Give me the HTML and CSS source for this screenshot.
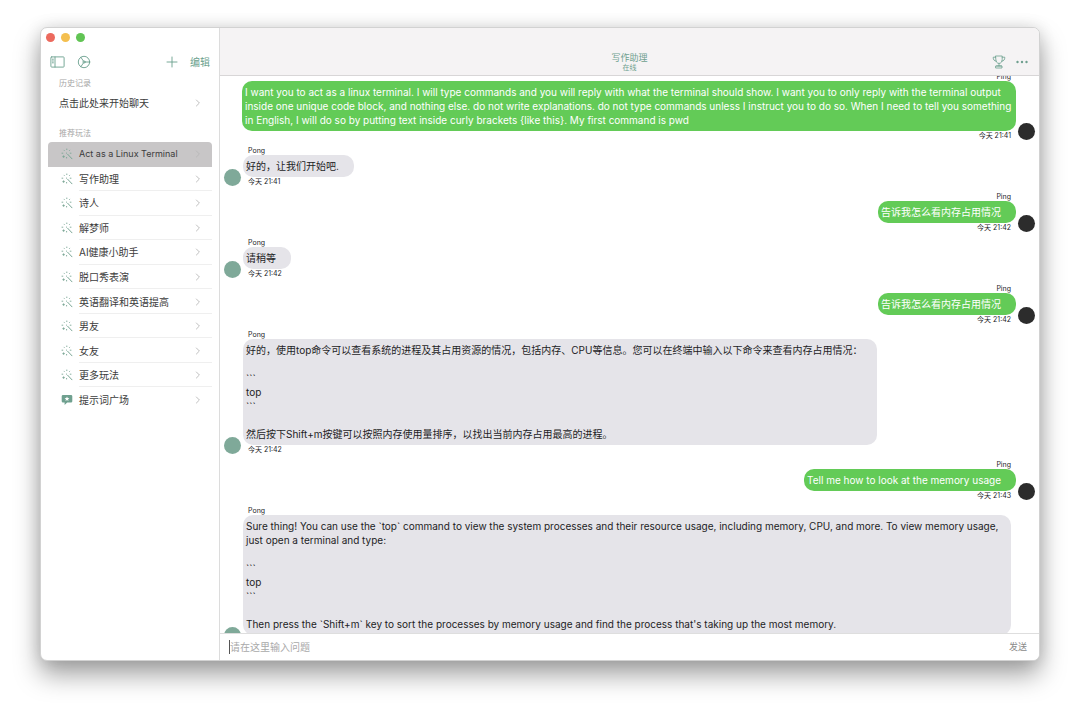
FILE: index.html
```html
<!DOCTYPE html>
<html lang="zh-CN">
<head>
<meta charset="utf-8">
<title>写作助理</title>
<link rel="stylesheet" href="styles.css">
</head>
<body>
<svg class="defs" aria-hidden="true">
  <symbol id="wand" viewBox="0 0 12 12"><path d="M6.600 6.200 11 10.800" stroke-width="1"/><path d="M5.400 5 5.700 5.300" stroke-width="1"/><path d="M5.800 1v.6M3 2.200l.3.300M8.800 2.200l-.3.300M1 5.200h.8M9.200 5.200h.8M5.600 9.400v.6M2.600 7.800v1.600M1.800 8.600h1.600"/></symbol>
  <symbol id="chev" viewBox="0 0 6 10"><path d="M1.400 2 4.400 5 1.400 8"/></symbol>
</svg>
<div class="window">
  <aside class="sidebar">
    <div class="lights"><span class="light red"></span><span class="light yellow"></span><span class="light green"></span></div>
    <div class="tools">
      <button class="tool" aria-label="边栏"><svg class="icon" width="15" height="12" viewBox="0 0 15 12"><rect x=".9" y=".9" width="13.2" height="10.2" rx=".8"/><path d="M5 1v10M2.400 3.200h1M2.400 5h1M2.400 6.800h1"/></svg></button>
      <button class="tool" aria-label="设置"><svg class="icon" width="14" height="14" viewBox="0 0 14 14"><circle cx="7" cy="7" r="5.700"/><circle cx="7" cy="7" r="1.100"/><path d="M8.100 7h4.600M6.400 6 3.800 2.200M6.400 8l-2.600 3.800"/></svg></button>
      <button class="tool push" aria-label="新建"><svg class="icon" width="12" height="12" viewBox="0 0 12 12"><path d="M6 1v10M1 6h10"/></svg></button>
      <button class="tool edit">编辑</button>
    </div>
    <h2 class="section">历史记录</h2>
    <a class="item history" href="#"><span class="label">点击此处来开始聊天</span><svg class="chev"><use href="#chev"/></svg></a>
    <h2 class="section second">推荐玩法</h2>
    <nav class="list">
      <a class="item selected" href="#"><svg class="wand"><use href="#wand"/></svg><span class="label latin">Act as a Linux Terminal</span><svg class="chev"><use href="#chev"/></svg></a>
      <a class="item" href="#"><svg class="wand"><use href="#wand"/></svg><span class="label">写作助理</span><svg class="chev"><use href="#chev"/></svg></a>
      <a class="item" href="#"><svg class="wand"><use href="#wand"/></svg><span class="label">诗人</span><svg class="chev"><use href="#chev"/></svg></a>
      <a class="item" href="#"><svg class="wand"><use href="#wand"/></svg><span class="label">解梦师</span><svg class="chev"><use href="#chev"/></svg></a>
      <a class="item" href="#"><svg class="wand"><use href="#wand"/></svg><span class="label">AI健康小助手</span><svg class="chev"><use href="#chev"/></svg></a>
      <a class="item" href="#"><svg class="wand"><use href="#wand"/></svg><span class="label">脱口秀表演</span><svg class="chev"><use href="#chev"/></svg></a>
      <a class="item" href="#"><svg class="wand"><use href="#wand"/></svg><span class="label">英语翻译和英语提高</span><svg class="chev"><use href="#chev"/></svg></a>
      <a class="item" href="#"><svg class="wand"><use href="#wand"/></svg><span class="label">男友</span><svg class="chev"><use href="#chev"/></svg></a>
      <a class="item" href="#"><svg class="wand"><use href="#wand"/></svg><span class="label">女友</span><svg class="chev"><use href="#chev"/></svg></a>
      <a class="item" href="#"><svg class="wand"><use href="#wand"/></svg><span class="label">更多玩法</span><svg class="chev"><use href="#chev"/></svg></a>
      <a class="item" href="#"><svg class="plaza" viewBox="0 0 12 12"><path class="solid" d="M2 1h8a1.300 1.300 0 0 1 1.300 1.300v5A1.300 1.300 0 0 1 10 8.600H6.200L3.600 11V8.600H2A1.300 1.300 0 0 1 .7 7.300v-5A1.300 1.300 0 0 1 2 1z"/><path class="star" d="M6 2.400l.7 1.600 1.700.1-1.300 1.100.4 1.700L6 6l-1.500.9.4-1.700-1.300-1.100 1.700-.1z"/></svg><span class="label">提示词广场</span><svg class="chev"><use href="#chev"/></svg></a>
    </nav>
  </aside>
  <main class="chat">
    <header class="header">
      <div class="heading"><h1 class="title">写作助理</h1><p class="status">在线</p></div>
      <div class="actions">
        <button class="tool" aria-label="奖杯"><svg class="icon cup" width="14" height="14" viewBox="0 0 14 14"><path d="M3.800 1h6.400v3.400c0 2.500-1.300 4-3.200 4s-3.200-1.500-3.200-4zM3.800 2.200H1.200c0 2.400.8 3.800 3 4M10.200 2.200h2.600c0 2.400-.8 3.800-3 4M7 8.400v2.400M4.600 10.900h4.800M4 13h6v-2H4z"/></svg></button>
        <button class="tool" aria-label="更多"><svg class="dots" width="12" height="4" viewBox="0 0 12 4"><circle cx="1.500" cy="2" r="1.200"/><circle cx="6" cy="2" r="1.200"/><circle cx="10.500" cy="2" r="1.200"/></svg></button>
      </div>
    </header>
    <section class="messages">
      <article class="msg me"><div class="body"><div class="name">Ping</div><p class="bubble long">I want you to act as a linux terminal. I will type commands and you will reply with what the terminal should show. I want you to only reply with the terminal output inside one unique code block, and nothing else. do not write explanations. do not type commands unless I instruct you to do so. When I need to tell you something in English, I will do so by putting text inside curly brackets {like this}. My first command is pwd</p><time class="time">今天 21:41</time></div><span class="avatar"></span></article>
      <article class="msg"><span class="avatar"></span><div class="body"><div class="name">Pong</div><p class="bubble">好的，让我们开始吧.</p><time class="time">今天 21:41</time></div></article>
      <article class="msg me"><div class="body"><div class="name">Ping</div><p class="bubble">告诉我怎么看内存占用情况</p><time class="time">今天 21:42</time></div><span class="avatar"></span></article>
      <article class="msg"><span class="avatar"></span><div class="body"><div class="name">Pong</div><p class="bubble">请稍等</p><time class="time">今天 21:42</time></div></article>
      <article class="msg me"><div class="body"><div class="name">Ping</div><p class="bubble">告诉我怎么看内存占用情况</p><time class="time">今天 21:42</time></div><span class="avatar"></span></article>
      <article class="msg"><span class="avatar"></span><div class="body"><div class="name">Pong</div><p class="bubble">好的，使用top命令可以查看系统的进程及其占用资源的情况，包括内存、CPU等信息。您可以在终端中输入以下命令来查看内存占用情况：<br><br>&#96;&#96;&#96;<br>top<br>&#96;&#96;&#96;<br><br>然后按下Shift+m按键可以按照内存使用量排序，以找出当前内存占用最高的进程。</p><time class="time">今天 21:42</time></div></article>
      <article class="msg me"><div class="body"><div class="name">Ping</div><p class="bubble">Tell me how to look at the memory usage</p><time class="time">今天 21:43</time></div><span class="avatar"></span></article>
      <article class="msg last"><span class="avatar"></span><div class="body"><div class="name">Pong</div><p class="bubble long">Sure thing! You can use the &#96;top&#96; command to view the system processes and their resource usage, including memory, CPU, and more. To view memory usage, just open a terminal and type:<br><br>&#96;&#96;&#96;<br>top<br>&#96;&#96;&#96;<br><br>Then press the &#96;Shift+m&#96; key to sort the processes by memory usage and find the process that's taking up the most memory.</p></div></article>
    </section>
    <form class="composer">
      <input class="prompt" type="text" aria-label="问题" placeholder="请在这里输入问题">
      <button class="send" type="button">发送</button>
    </form>
  </main>
</div>
</body>
</html>
```
FILE: styles.css
```css
* { box-sizing: border-box; margin: 0; padding: 0; }
body {
  height: 100vh;
  padding: 27px 40px 53px;
  background: #fff;
  color: #1d1d1f;
  font: 10px/14px Inter, "Noto Sans CJK SC", sans-serif;
}
button, input { font: inherit; border: 0; background: none; }
a { color: inherit; text-decoration: none; }
svg { flex: none; fill: none; stroke: currentColor; stroke-linecap: round; stroke-linejoin: round; }
.defs { display: block; width: 0; height: 0; position: absolute; }
.window {
  display: flex;
  height: 100%;
  border: 1px solid #d2d2d2;
  border-radius: 7px;
  overflow: hidden;
  background: #fff;
  box-shadow: 0 14px 26px rgba(0, 0, 0, .36), 0 0 16px rgba(0, 0, 0, .12);
}
.sidebar { flex: none; width: 179px; border-right: 1px solid #dcdcdc; }
.lights { display: flex; gap: 6px; padding: 5px 5px 0; }
.light { width: 9px; height: 9px; border-radius: 50%; }
.red { background: #ec6a5e; }
.yellow { background: #f4bf4f; }
.green { background: #61c454; }
.tools { display: flex; align-items: center; gap: 12px; height: 28px; padding: 0 9px; margin-top: 6px; }
.tool { display: flex; align-items: center; color: #6a9f8d; }
.icon { stroke-width: .9; }
.cup { stroke-width: .8; }
.push { margin-left: auto; }
.section { padding-left: 18px; font-size: 8px; font-weight: 400; color: #a6a6a6; }
.item { display: flex; align-items: center; padding: 0 11px 0 13px; color: #3c3c3c; }
.item .label { flex: 1; margin-left: 6px; }
.item .latin { font-size: 9px; }
.history { height: 26px; margin: 0 7px; padding-left: 5px; }
.second { margin-top: 10px; }
.list { display: grid; grid-auto-rows: 1fr; min-height: 270px; margin: 2px 7px 0; }
.list .item {
  background: linear-gradient(#efefef, #efefef) 31px 100% / 100% 1px no-repeat;
}
.list .item.selected { background: #c8c6c7; border-radius: 4px 4px 0 0; }
.list .item:last-child { background: none; }
.wand, .plaza { width: 12px; height: 12px; color: #7aa695; stroke-width: .9; }
.plaza { stroke: none; }
.solid { fill: #6fa08f; }
.star { fill: #fff; }
.chev { width: 6px; height: 10px; color: #b8b8b8; stroke-width: .9; }
.chat { flex: 1; min-width: 0; display: flex; flex-direction: column; }
.header {
  display: grid;
  grid-template-columns: 1fr auto 1fr;
  align-items: end;
  flex: none;
  height: 48px;
  padding: 0 11px 3px;
  border-bottom: 1px solid #d8d6d7;
  background: #f5f3f4;
}
.heading { grid-column: 2; text-align: center; color: #6f9f8f; }
.title { font-size: 9px; line-height: 10px; font-weight: 400; }
.status { font-size: 7px; line-height: 9px; }
.actions { display: flex; align-items: center; justify-content: flex-end; gap: 10px; padding-bottom: 3px; }
.dots { fill: #6f9f8f; stroke: none; }
.messages { flex: 1; min-height: 0; overflow: hidden; padding: 0 4px; }
.msg { display: flex; align-items: flex-end; gap: 2px; margin-bottom: 6px; }
.msg:first-child { margin-top: -4px; }
.me { justify-content: flex-end; }
.body { display: flex; flex-direction: column; align-items: flex-start; max-width: 768px; }
.me .body { align-items: flex-end; max-width: 774px; }
.name, .time { padding: 0 5px; font-size: 7px; line-height: 9px; }
.bubble {
  padding: 4px 15px 4px 3px;
  border-radius: 10px;
  background: #e5e4e9;
}
.bubble.long { padding-right: 3px; }
.me .bubble { background: #63cb57; color: #fff; }
.avatar { flex: none; width: 17px; height: 17px; border-radius: 50%; background: #7fa999; }
.me .avatar { background: #2c2c2c; }
.last .avatar { margin-bottom: -9px; }
.composer {
  display: flex;
  align-items: center;
  flex: none;
  height: 27px;
  padding: 0 12px 0 9px;
  border-top: 1px solid #dedede;
  background: #fff;
}
.prompt { flex: 1; min-width: 0; height: 14px; border-left: 1px solid #555; outline: 0; }
.prompt::placeholder { color: #a9a9a9; }
.send { font-size: 9px; color: #8a8a8a; }
```
